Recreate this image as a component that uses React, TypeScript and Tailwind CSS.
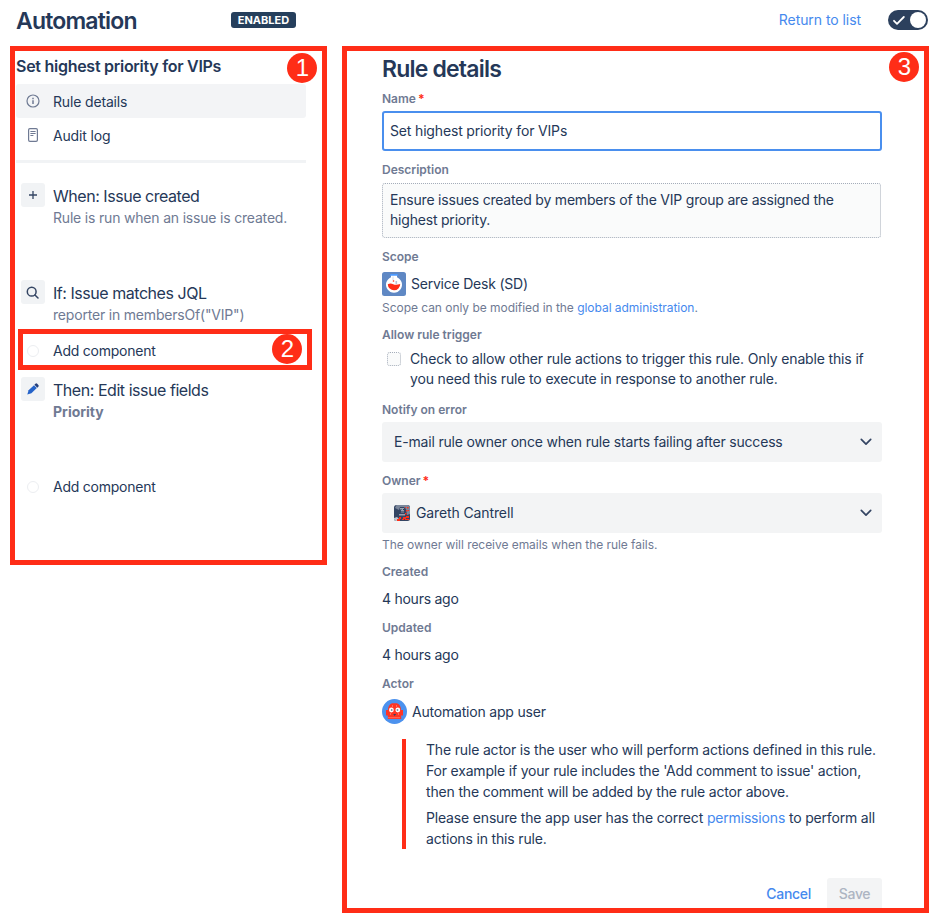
import type { ReactNode } from "react";

function Badge({ n, className }: { n: number; className: string }) {
  return (
    <div
      className={`absolute flex size-[30px] items-center justify-center rounded-full bg-[#ff2d17] font-['Liberation_Sans',sans-serif] text-[24px] leading-[30px] tracking-normal text-white ${className}`}
    >
      {n}
    </div>
  );
}

function Label({ children, required, className }: { children: ReactNode; required?: boolean; className?: string }) {
  return (
    <div className={`flex h-4 items-center text-[12px] leading-4 font-semibold tracking-normal text-[#6f7a93] ${className ?? ""}`}>
      {children}
      {required && <span className="ml-[2px] font-bold text-[#ff2d17]">*</span>}
    </div>
  );
}

function Chevron() {
  return (
    <svg width="12" height="8" viewBox="0 0 12 8" fill="none" stroke="#344563" strokeWidth="1.7" strokeLinecap="round" strokeLinejoin="round">
      <path d="M1.3 1.4 6 6.2l4.7-4.8" />
    </svg>
  );
}

function Step({ icon, title, children, className }: { icon: ReactNode; title: string; children: ReactNode; className: string }) {
  return (
    <div className={`flex ${className}`}>
      <div className="ml-[6px] flex size-6 shrink-0 items-center justify-center rounded-[3px] bg-[#f1f3f5]">{icon}</div>
      <div className="ml-2 whitespace-nowrap">
        <div className="mt-[2px] h-[23px] text-[16px] leading-[23px] tracking-[-0.46px] text-[#253858]">{title}</div>
        <div className="h-5 text-[14px] leading-5 tracking-[-0.19px] text-[#6f7a93]">{children}</div>
      </div>
    </div>
  );
}

function AddComponent({ className }: { className: string }) {
  return (
    <div className={`flex h-5 items-center text-[14px] leading-5 text-[#253858] ${className}`}>
      <span className="mr-[14px] size-3 rounded-full border border-[#eceef1]" />
      <span className="tracking-[-0.24px]">Add component</span>
    </div>
  );
}

function ScopeIcon() {
  return (
    <svg width="24" height="24" viewBox="0 0 24 24">
      <rect width="24" height="24" rx="2.5" fill="#5f88c4" />
      <rect x="8" y="2" width="8" height="2" rx="1" fill="#4c9aff" />
      <path d="M9 3.8h6v1.5a8 8 0 1 1-6 0Z" fill="#fff" />
      <path d="M5.8 12.2q2.7-1.2 5.4 0t7-.2a6.2 6.2 0 1 1-12.4.2Z" fill="#ff2d17" />
      <path d="M13.5 9h1.6v3h-1.6z" fill="#b8c5d8" />
      <path d="M11 4.5v3.5" stroke="#c8d3e2" strokeWidth=".8" />
      <circle cx="11.5" cy="9" r=".8" fill="#ff2d17" />
    </svg>
  );
}

function OwnerAvatar() {
  return (
    <svg width="16" height="16" viewBox="0 0 16 16">
      <rect width="16" height="16" rx="2.5" fill="#344563" />
      <path d="M2.5 0h11A2.5 2.5 0 0 1 16 2.5V9l-3 1-1-6-2-2H6L5 5 1 3Z" fill="#7a869a" />
      <path d="M6 3h4v2H6zM7 5h3v3H7zM5 9h6v1.5H5z" fill="#97a0af" />
      <path d="M6.5 4h1v1h-1zM9 4h1v1H9zM7 6.5h3v1H7z" fill="#253858" />
      <path d="M0 13l3-1 2 2 1 2H2.5A2.5 2.5 0 0 1 0 13.5Z" fill="#c1c7d0" />
      <path d="M11 8h1.5v1.5H11zM12 5h1.5v1.5H12zM13 2h1.5v1.5H13zM11 2h1v1h-1zM14 5h1v1h-1zM12 11h3v2h-3zM9 12h3v2H9zM5 12h2v2H5zM3 14h3v2H3zM8 14h2v1H8zM11 14h4v1h-4z" fill="#ff2d17" />
    </svg>
  );
}

function RobotAvatar() {
  return (
    <svg width="25" height="25" viewBox="0 0 25 25">
      <circle cx="12.5" cy="12.5" r="12.5" fill="#4c92ee" />
      <path d="M10 4.3h5q4 1.7 4 6.7h2v5.5h-1.8V20H5.8v-3.5H4V11h2q0-5 4-6.7Z" fill="#ff3524" />
      <circle cx="9.4" cy="11" r="2.4" fill="#fff" />
      <circle cx="15.8" cy="11" r="2.4" fill="#fff" />
      <circle cx="9.7" cy="11" r=".9" fill="#7a869a" />
      <circle cx="15.5" cy="11" r=".9" fill="#7a869a" />
      <path d="M11.2 15h3l-1.5 2Z" fill="#344563" />
      <path d="M6.5 18.7h12" stroke="#ffc0b8" strokeWidth=".8" strokeDasharray="1 1" />
      <path d="M10 7h1M14 7h1M8 15h1M16 15h1" stroke="#ffc0b8" strokeWidth=".8" />
    </svg>
  );
}

export default function App() {
  return (
    <div className="h-[923px] w-[940px] overflow-hidden bg-white font-['Inter',sans-serif] text-[14px] tracking-[-0.16px] text-[#253858]">
      <header className="flex h-[46px] items-start pl-4">
        <h1 className="mt-[5px] w-[215px] text-[23px] leading-8 font-semibold tracking-[-0.82px]">Automation</h1>
        <span className="mt-3 flex h-4 w-[65px] items-center justify-center rounded-[3px] bg-[#253f5c] text-[11px] leading-4 font-bold tracking-normal text-white">
          ENABLED
        </span>
        <a className="mt-[10px] ml-auto leading-5 tracking-[-0.06px] text-[#4589ee]">Return to list</a>
        <span className="mt-[10px] mr-3 ml-[27px] flex h-5 w-10 items-center justify-between rounded-full bg-[#2c405d] pr-[2px] pl-[5px]">
          <svg width="12" height="9" viewBox="0 0 12 9" fill="none" stroke="#fff" strokeWidth="1.8" strokeLinecap="round" strokeLinejoin="round">
            <path d="m1 4.8 3 3L10.8 1" />
          </svg>
          <span className="size-4 rounded-full bg-white" />
        </span>
      </header>

      <main className="flex items-start">
        <aside className="relative ml-[10px] h-[519px] w-[317px] shrink-0 border-[5px] border-[#ff2d17]">
          <Badge n={1} className="top-[2.4px] left-[272.4px]" />
          <h2 className="mt-[5px] ml-px h-5 text-[16px] leading-5 font-semibold tracking-[-0.27px] whitespace-nowrap">
            Set highest priority for VIPs
          </h2>
          <nav className="mt-2 ml-px w-[290px]">
            <div className="flex h-[34px] items-center rounded-[3px] bg-[#f3f4f6]">
              <svg className="mr-[13px] ml-[10px]" width="14" height="14" viewBox="0 0 14 14" fill="none" stroke="#6f7a93" strokeWidth="1.2">
                <circle cx="7" cy="7" r="6" />
                <path d="M7 6.3v3.6" strokeWidth="1.5" />
                <path d="M7 3.8v1.5" strokeWidth="1.5" />
              </svg>
              <span>Rule details</span>
            </div>
            <div className="flex h-[34px] items-center">
              <svg className="mr-[15px] ml-[12px]" width="10" height="14" viewBox="0 0 10 14" fill="none" stroke="#6f7a93" strokeWidth="1.2">
                <rect x=".6" y=".6" width="8.8" height="12.8" rx="1.3" />
                <path d="M2.4 3.5h5.2M2.4 5.5h5.2M2.4 7.5h3" />
              </svg>
              <span>Audit log</span>
            </div>
            <div className="mt-2 h-[3px] bg-[#f1f3f5]" />
          </nav>

          <Step
            className="mt-5"
            title="When: Issue created"
            icon={
              <svg width="8" height="8" viewBox="0 0 8 8" stroke="#344563" strokeWidth="1.3">
                <path d="M4 0v8M0 4h8" />
              </svg>
            }
          >
            Rule is run when an issue is created.
          </Step>
          <Step
            className="mt-[52px]"
            title="If: Issue matches JQL"
            icon={
              <svg className="-ml-px" width="13" height="13" viewBox="0 0 13 13" fill="none" stroke="#344563" strokeWidth="1.5" strokeLinecap="round">
                <circle cx="5.7" cy="5.7" r="4.4" />
                <path d="m9 9 3 3" />
              </svg>
            }
          >
            reporter in membersOf("VIP")
          </Step>
          <div className="relative mt-1 ml-[3px] h-[41px] w-[294px] border-[5px] border-[#ff2d17] pt-[7px]">
            <AddComponent className="ml-1" />
            <Badge n={2} className="top-[0.4px] left-[249.4px]" />
          </div>
          <Step
            className="mt-[7px]"
            title="Then: Edit issue fields"
            icon={
              <svg width="12" height="12" viewBox="0 0 12 12">
                <path d="m.3 11.5 1.3-4.2L7 2.2l2.8 2.8-5.4 5.2Z" fill="#2563c9" />
                <path d="m7.4 1.7 1-.9a1.3 1.3 0 0 1 1.8 0l1.1 1.1a1.3 1.3 0 0 1 0 1.8l-1 1Z" fill="#253f7c" />
              </svg>
            }
          >
            <b className="tracking-normal">Priority</b>
          </Step>
          <AddComponent className="mt-[55px] ml-3" />
        </aside>

        <section className="relative ml-[15px] h-[867px] w-[587px] shrink-0 overflow-hidden border-[5px] border-[#ff2d17] pl-[35px]">
          <Badge n={3} className="top-[1.4px] left-[542.4px]" />
          <div className="flex w-[500px] flex-col">
            <h2 className="mt-[2px] h-8 text-[23px] leading-8 font-semibold tracking-[-0.8px]">Rule details</h2>
            <Label required className="mt-[6px]">Name</Label>
            <div className="mt-1 flex h-10 items-center rounded-[3px] border-2 border-[#4a8fee] pb-px pl-[6px]">Set highest priority for VIPs</div>

            <Label className="mt-[11px]">Description</Label>
            <div className="mt-[5px] mr-px h-[55px] rounded-[3px] border border-dotted border-[#a5adba] bg-[#fafbfb] pt-[6px] pl-[7px] leading-5 tracking-[-0.2px]">
              Ensure issues created by members of the VIP group are assigned the
              <br />
              highest priority.
            </div>

            <Label className="mt-[11px]">Scope</Label>
            <div className="mt-[7px] flex h-6 items-center gap-[5px]">
              <ScopeIcon />
              <span className="pb-px tracking-[-0.22px]">Service Desk (SD)</span>
            </div>
            <div className="mt-1 h-4 text-[12px] leading-4 tracking-[-0.04px] text-[#6f7a93]">
              Scope can only be modified in the <a className="text-[#4589ee]">global administration</a>.
            </div>

            <Label className="mt-[11px]">Allow rule trigger</Label>
            <div className="mt-[6px] flex h-10 leading-5">
              <span className="mt-[3px] mr-[9px] ml-[5px] size-[14px] shrink-0 rounded-[3px] border border-dotted border-[#a5adba] bg-[#fafbfb]" />
              <p className="tracking-[-0.15px] whitespace-nowrap">
                Check to allow other rule actions to trigger this rule. Only enable this if
                <br />
                you need this rule to execute in response to another rule.
              </p>
            </div>

            <Label className="mt-[13px]">Notify on error</Label>
            <div className="mt-1 flex h-10 items-center justify-between rounded-[3px] bg-[#f3f4f5] pr-[10px] pl-3">
              <span className="pb-px tracking-[-0.185px]">E-mail rule owner once when rule starts failing after success</span>
              <Chevron />
            </div>

            <Label required className="mt-[11px]">Owner</Label>
            <div className="mt-1 flex h-10 items-center rounded-[3px] bg-[#f3f4f5] pr-[10px] pl-3">
              <OwnerAvatar />
              <span className="ml-[6px] flex-1 pb-px tracking-[-0.12px]">Gareth Cantrell</span>
              <Chevron />
            </div>
            <div className="mt-1 h-4 text-[12px] leading-4 tracking-[-0.05px] text-[#6f7a93]">
              The owner will receive emails when the rule fails.
            </div>

            <Label className="mt-[11px]">Created</Label>
            <div className="mt-[9px] h-5 leading-5 tracking-[-0.26px]">4 hours ago</div>
            <Label className="mt-[11px]">Updated</Label>
            <div className="mt-[9px] h-5 leading-5 tracking-[-0.26px]">4 hours ago</div>
            <Label className="mt-[11px]">Actor</Label>
            <div className="mt-[7px] flex h-[25px] items-center gap-[5px]">
              <RobotAvatar />
              <span className="tracking-[-0.2px]">Automation app user</span>
            </div>

            <div className="mt-[15px] ml-5 h-[110px] border-l-4 border-[#ff2d17] pl-5 leading-[21px] tracking-[-0.17px] whitespace-nowrap">
              <p>
                The rule actor is the user who will perform actions defined in this rule.
                <br />
                <span className="tracking-[-0.19px]">For example if your rule includes the 'Add comment to issue' action,</span>
                <br />
                then the comment will be added by the rule actor above.
              </p>
              <p className="mt-[5px]">
                Please ensure the app user has the correct <a className="text-[#4589ee]">permissions</a> to perform all
                <br />
                actions in this rule.
              </p>
            </div>

            <div className="mt-[29px] flex justify-end gap-4 leading-8 font-medium">
              <button className="tracking-[-0.3px] text-[#4589ee]">Cancel</button>
              <button className="h-8 w-[55px] rounded-[3px] bg-[#f3f4f5] tracking-[-0.3px] text-[#adb5c2]">Save</button>
            </div>
          </div>
        </section>
      </main>
    </div>
  );
}
